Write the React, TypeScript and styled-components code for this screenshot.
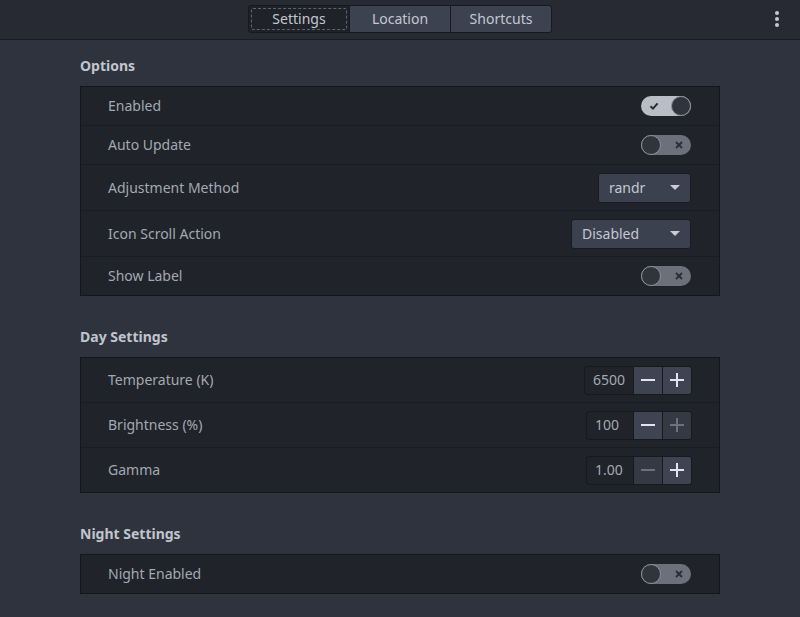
import React from "react";
import styled, { createGlobalStyle } from "styled-components";

const Global = createGlobalStyle`
  html, body { margin: 0; padding: 0; background: #2f333d; }
  body { font-family: "Noto Sans", "Open Sans", sans-serif; font-size: 14px; color: #aeb4bd; }
  * { box-sizing: border-box; }
`;

const Page = styled.div`
  width: 800px;
  height: 617px;
  background: #2f333d;
  overflow: hidden;
  display: flex;
  flex-direction: column;
`;

const Header = styled.header`
  height: 40px;
  flex: none;
  background: #272a32;
  border-bottom: 1px solid #1a1c21;
  display: grid;
  grid-template-columns: 1fr auto 1fr;
  align-items: center;
`;

const TabGroup = styled.div`
  grid-column: 2;
  display: flex;
  margin-top: -1px;
  border: 1px solid #17191d;
  border-radius: 3px;
  overflow: hidden;
  background: #17191d;
  gap: 1px;
`;

const Tab = styled.button<{ $active?: boolean }>`
  position: relative;
  width: 100px;
  height: 26px;
  border: none;
  padding: 0 0 2px;
  font-family: inherit;
  font-size: 14px;
  color: #c3c8d0;
  background: ${(p) => (p.$active ? "#1f2228" : "#3d4250")};
  &::after {
    content: "";
    display: ${(p) => (p.$active ? "block" : "none")};
    position: absolute;
    inset: 2px;
    border: 1px dashed #5d626c;
    border-radius: 2px;
  }
`;

const MenuSlot = styled.div`
  grid-column: 3;
  justify-self: end;
  margin-right: 21px;
  display: flex;
  flex-direction: column;
  gap: 2px;
  margin-top: -1px;
`;

const Dot = styled.span`
  width: 4px;
  height: 4px;
  border-radius: 50%;
  background: #c4c8cf;
`;

const Main = styled.main`
  width: 640px;
  margin: 0 auto;
  padding-top: 16px;
  display: flex;
  flex-direction: column;
  gap: 31px;
`;

const Section = styled.section`
  display: flex;
  flex-direction: column;
  gap: 10px;
`;

const Heading = styled.h2`
  margin: 0;
  font-size: 14px;
  line-height: 20px;
  font-weight: 700;
  color: #c0c5cd;
`;

const Frame = styled.div`
  background: #20232a;
  border: 1px solid #14161a;
  display: flex;
  flex-direction: column;
`;

const Row = styled.div<{ $h: number }>`
  height: ${(p) => p.$h}px;
  padding: 0 28px 0 27px;
  display: flex;
  align-items: center;
  justify-content: space-between;
  & + & { border-top: 1px solid #1a1c21; }
`;

const Label = styled.span`
  color: #a3a9b1;
  font-size: 14px;
  margin-top: -1px;
`;

const Track = styled.div<{ $on?: boolean }>`
  position: relative;
  width: 50px;
  height: 20px;
  border-radius: 10px;
  background: ${(p) => (p.$on ? "#b9bdc5" : "#6c707a")};
  display: flex;
  align-items: center;
  justify-content: space-between;
  padding: 0 ${(p) => (p.$on ? "0 0 8px" : "8px 0 0")};
  flex-direction: ${(p) => (p.$on ? "row" : "row-reverse")};
`;

const Knob = styled.div`
  width: 20px;
  height: 20px;
  border-radius: 50%;
  background: #30343d;
  border: 1px solid #8b9099;
`;

const Switch = ({ on }: { on?: boolean }) => (
  <Track $on={on}>
    {on ? (
      <svg width="10" height="10" viewBox="0 0 10 10">
        <path d="M1.5 5.2 L4 7.6 L8.6 2.4" fill="none" stroke="#2a2d35" strokeWidth="2" />
      </svg>
    ) : (
      <svg width="8" height="8" viewBox="0 0 8 8">
        <path d="M1 1 L7 7 M7 1 L1 7" stroke="#2a2d35" strokeWidth="1.8" />
      </svg>
    )}
    <Knob />
  </Track>
);

const Combo = styled.div<{ $w: number }>`
  width: ${(p) => p.$w}px;
  height: 30px;
  border-radius: 3px;
  background: #3c4150;
  border: 1px solid #191b20;
  display: flex;
  align-items: center;
  justify-content: space-between;
  padding: 0 10px 1px 10px;
  color: #c3c8d0;
  font-size: 14px;
`;

const Caret = styled.span`
  width: 0;
  height: 0;
  margin-top: 1px;
  border-left: 5px solid transparent;
  border-right: 5px solid transparent;
  border-top: 5px solid #c8ccd3;
`;

const Dropdown = ({ value, w }: { value: string; w: number }) => (
  <Combo $w={w}>
    {value}
    <Caret />
  </Combo>
);

const Spin = styled.div`
  display: flex;
  height: 29px;
  margin-right: -1px;
  border: 1px solid #17191d;
  border-radius: 3px;
  overflow: hidden;
  background: #17191d;
  gap: 1px;
`;

const Entry = styled.div<{ $w: number }>`
  width: ${(p) => p.$w}px;
  background: #20232a;
  color: #a3a9b1;
  display: flex;
  align-items: center;
  padding: 0 0 1px 8px;
  font-size: 14px;
`;

const StepBtn = styled.div<{ $disabled?: boolean }>`
  width: 28px;
  background: ${(p) => (p.$disabled ? "#353944" : "#3f4453")};
  display: flex;
  align-items: center;
  justify-content: center;
  color: ${(p) => (p.$disabled ? "#6d717a" : "#e2e5e9")};
`;

const Minus = () => (
  <svg width="16" height="16" viewBox="0 0 16 16">
    <rect x="1" y="7" width="14" height="2" fill="currentColor" />
  </svg>
);
const Plus = () => (
  <svg width="16" height="16" viewBox="0 0 16 16">
    <rect x="1" y="7" width="14" height="2" fill="currentColor" />
    <rect x="7" y="1" width="2" height="14" fill="currentColor" />
  </svg>
);

const SpinButton = ({
  value,
  w,
  minusOff,
  plusOff,
}: {
  value: string;
  w: number;
  minusOff?: boolean;
  plusOff?: boolean;
}) => (
  <Spin>
    <Entry $w={w}>{value}</Entry>
    <StepBtn $disabled={minusOff}>
      <Minus />
    </StepBtn>
    <StepBtn $disabled={plusOff}>
      <Plus />
    </StepBtn>
  </Spin>
);

export default function App() {
  return (
    <Page>
      <Global />
      <Header>
        <TabGroup>
          <Tab $active>Settings</Tab>
          <Tab>Location</Tab>
          <Tab>Shortcuts</Tab>
        </TabGroup>
        <MenuSlot>
          <Dot />
          <Dot />
          <Dot />
        </MenuSlot>
      </Header>
      <Main>
        <Section>
          <Heading>Options</Heading>
          <Frame>
            <Row $h={38}>
              <Label>Enabled</Label>
              <Switch on />
            </Row>
            <Row $h={39}>
              <Label>Auto Update</Label>
              <Switch />
            </Row>
            <Row $h={46}>
              <Label>Adjustment Method</Label>
              <Dropdown value="randr" w={93} />
            </Row>
            <Row $h={46}>
              <Label>Icon Scroll Action</Label>
              <Dropdown value="Disabled" w={120} />
            </Row>
            <Row $h={39}>
              <Label>Show Label</Label>
              <Switch />
            </Row>
          </Frame>
        </Section>
        <Section>
          <Heading>Day Settings</Heading>
          <Frame>
            <Row $h={44}>
              <Label>Temperature (K)</Label>
              <SpinButton value="6500" w={48} />
            </Row>
            <Row $h={45}>
              <Label>Brightness (%)</Label>
              <SpinButton value="100" w={46} plusOff />
            </Row>
            <Row $h={45}>
              <Label>Gamma</Label>
              <SpinButton value="1.00" w={46} minusOff />
            </Row>
          </Frame>
        </Section>
        <Section>
          <Heading>Night Settings</Heading>
          <Frame>
            <Row $h={38}>
              <Label>Night Enabled</Label>
              <Switch />
            </Row>
          </Frame>
        </Section>
      </Main>
    </Page>
  );
}
